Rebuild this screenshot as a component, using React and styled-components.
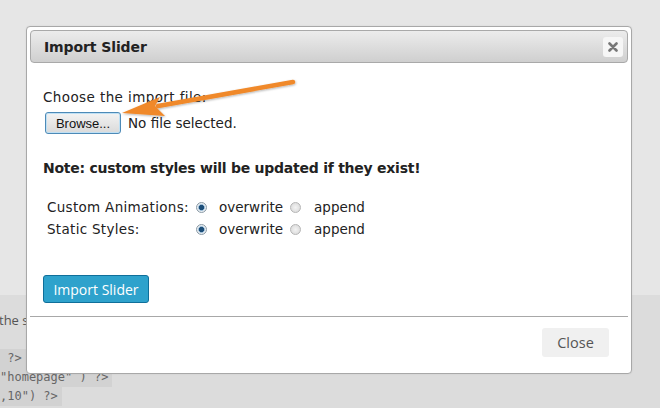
import React from "react";
import styled, { createGlobalStyle } from "styled-components";

const Global = createGlobalStyle`
  *, *::before, *::after { box-sizing: border-box; }
  html, body { margin: 0; padding: 0; }
  body { width: 660px; height: 408px; overflow: hidden; font-family: "DejaVu Sans", sans-serif; }
`;

const Page = styled.div`
  position: relative;
  width: 660px;
  height: 408px;
  display: flex;
  flex-direction: column;
  background: #dcdcdc;
`;

const TopBand = styled.div`
  height: 295px;
  background: #e6e6e6;
`;

const BottomBand = styled.div`
  flex: 1;
  display: flex;
  flex-direction: column;
  align-items: flex-start;
  padding-top: 16px;
`;

const PlainLine = styled.div`
  font-family: "Open Sans", sans-serif;
  font-size: 13px;
  color: #555;
  line-height: 18px;
  margin-left: -1px;
  margin-bottom: 20px;
`;

const CodeLine = styled.div`
  font-family: "DejaVu Sans Mono", monospace;
  font-size: 12px;
  line-height: 19px;
  color: #666;
  background: #d2d2d2;
  padding: 0 4px 0 0;
  white-space: pre;
`;

const Dialog = styled.div`
  position: absolute;
  left: 26px;
  top: 26px;
  width: 606px;
  height: 348px;
  background: #fff;
  border: 1px solid #a8a8a8;
  border-radius: 4px;
  padding: 3px;
  display: flex;
  flex-direction: column;
  box-shadow: 0 0 2px rgba(0, 0, 0, 0.08);
`;

const TitleBar = styled.div`
  height: 33px;
  flex: none;
  border: 1px solid #a9a9a9;
  border-radius: 4px;
  background: linear-gradient(#ececec, #cfcfcf);
  display: flex;
  align-items: center;
  justify-content: space-between;
  padding: 0 4px 0 13px;
`;

const Title = styled.span`
  font-weight: bold;
  font-size: 14px;
  color: #222;
  letter-spacing: -0.1px;
`;

const CloseX = styled.span`
  width: 20px;
  height: 20px;
  border-radius: 3px;
  background: #f6f6f6;
  display: flex;
  align-items: center;
  justify-content: center;
`;

const Body = styled.div`
  flex: 1;
  display: flex;
  flex-direction: column;
  align-items: flex-start;
  padding: 26px 0 0 13px;
  font-size: 13.5px;
  color: #222;
  position: relative;
`;

const Label = styled.div`
  line-height: 16px;
  letter-spacing: 0.4px;
`;

const FileRow = styled.div`
  display: flex;
  align-items: center;
  gap: 7px;
  margin-top: 7px;
  margin-left: 2px;
`;

const BrowseButton = styled.span`
  width: 76px;
  height: 22px;
  border: 1px solid #4d8ab7;
  border-radius: 3px;
  background: linear-gradient(#f3f3f3, #dadada);
  box-shadow: inset 0 0 0 1px #bfe0f4;
  font-family: "Liberation Sans", Arial, sans-serif;
  font-size: 13px;
  color: #111;
  display: flex;
  align-items: center;
  justify-content: center;
`;

const FileName = styled.span`
  font-size: 13.5px;
  color: #222;
`;

const Note = styled.div`
  margin-top: 26px;
  font-weight: bold;
  font-size: 14px;
  letter-spacing: -0.25px;
  color: #222;
`;

const OptionsTable = styled.div`
  margin-top: 23px;
  margin-left: 4px;
  display: grid;
  grid-template-columns: 149px auto;
  row-gap: 6px;
  color: #222;
`;

const OptionLabel = styled.span`
  line-height: 16px;
  letter-spacing: 0.3px;
`;

const Choices = styled.span`
  display: flex;
  align-items: center;
  line-height: 16px;
`;

const Radio = styled.span`
  width: 11px;
  height: 11px;
  border-radius: 50%;
  border: 1px solid ${(p) => (p.$checked ? "#8a9aa6" : "#b5b5b5")};
  background: ${(p) =>
    p.$checked
      ? "radial-gradient(circle, #1d4e78 0 2.3px, #6a9cc4 2.6px, #dfe8ef 3.6px, #f4f4f4 5px)"
      : "radial-gradient(circle, #f3f3f3 0, #dcdcdc 5px)"};
  margin-right: ${(p) => p.$gap}px;
`;

const ChoiceText = styled.span`
  margin-right: 7px;
`;

const PrimaryButton = styled.span`
  margin-top: 38px;
  width: 106px;
  height: 28px;
  border: 1px solid #0f6f9a;
  border-radius: 3px;
  background: #2ea2cc;
  color: #fff;
  font-family: "Open Sans", sans-serif;
  font-size: 14px;
  display: flex;
  align-items: center;
  justify-content: center;
`;

const Divider = styled.div`
  height: 1px;
  flex: none;
  background: #a8a8a8;
`;

const Footer = styled.div`
  height: 53px;
  flex: none;
  display: flex;
  justify-content: flex-end;
  align-items: flex-start;
  padding: 11px 19px 0 0;
`;

const CloseButton = styled.span`
  width: 67px;
  height: 29px;
  border-radius: 3px;
  background: #f0f0f0;
  color: #555;
  font-family: "Open Sans", sans-serif;
  font-size: 14.5px;
  display: flex;
  align-items: center;
  justify-content: center;
`;

const ArrowSvg = styled.svg`
  position: absolute;
  left: 0;
  top: 0;
  pointer-events: none;
  overflow: visible;
`;

function Arrow() {
  const ox = 30, oy = 64;
  const p = (x, y) => `${x - ox},${y - oy}`;
  return (
    <ArrowSvg width="300" height="100">
      <defs>
        <filter id="sh" x="-10%" y="-30%" width="120%" height="160%">
          <feDropShadow dx="0.5" dy="1" stdDeviation="0.8" floodColor="#000" floodOpacity="0.3" />
        </filter>
      </defs>
      <g filter="url(#sh)">
        <line x1={293 - ox} y1={83 - oy} x2={158 - ox} y2={107 - oy} stroke="#f0892a" strokeWidth="4.5" strokeLinecap="round" />
        <polygon points={`${p(122, 114)} ${p(160, 98)} ${p(155, 107)} ${p(165, 117)}`} fill="#f0892a" />
      </g>
    </ArrowSvg>
  );
}

function XIcon() {
  return (
    <svg width="10" height="10" viewBox="0 0 10 10">
      <path d="M1.5 1.5 L8.5 8.5 M8.5 1.5 L1.5 8.5" stroke="#777" strokeWidth="2.6" strokeLinecap="round" />
    </svg>
  );
}

function OptionRow({ label }) {
  return (
    <>
      <OptionLabel>{label}</OptionLabel>
      <Choices>
        <Radio $checked $gap={12} />
        <ChoiceText>overwrite</ChoiceText>
        <Radio $gap={13} />
        <ChoiceText>append</ChoiceText>
      </Choices>
    </>
  );
}

export default function App() {
  return (
    <>
      <Global />
      <Page>
        <TopBand />
        <BottomBand>
          <PlainLine>the s</PlainLine>
          <CodeLine>{" ?>"}</CodeLine>
          <CodeLine>{"\"homepage\" ) ?>"}</CodeLine>
          <CodeLine>{",10\") ?>"}</CodeLine>
        </BottomBand>
        <Dialog>
          <TitleBar>
            <Title>Import Slider</Title>
            <CloseX>
              <XIcon />
            </CloseX>
          </TitleBar>
          <Body>
            <Label>Choose the import file:</Label>
            <FileRow>
              <BrowseButton>Browse...</BrowseButton>
              <FileName>No file selected.</FileName>
            </FileRow>
            <Note>Note: custom styles will be updated if they exist!</Note>
            <OptionsTable>
              <OptionRow label="Custom Animations:" />
              <OptionRow label="Static Styles:" />
            </OptionsTable>
            <PrimaryButton>Import Slider</PrimaryButton>
            <Arrow />
          </Body>
          <Divider />
          <Footer>
            <CloseButton>Close</CloseButton>
          </Footer>
        </Dialog>
      </Page>
    </>
  );
}
